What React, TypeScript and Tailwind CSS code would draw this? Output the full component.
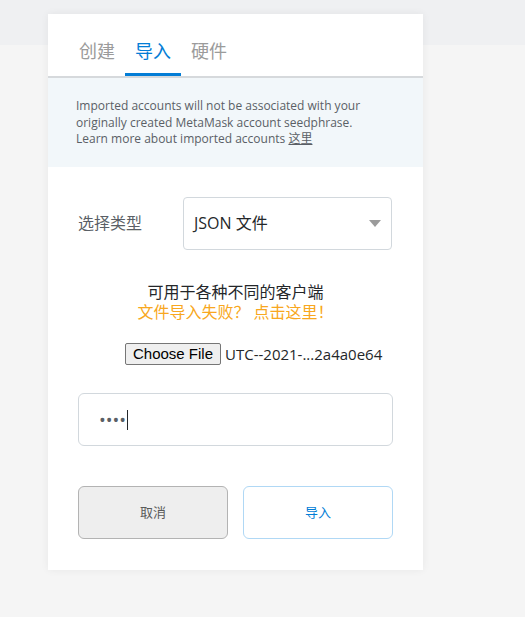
import React from 'react';

const tabs = ['创建', '导入', '硬件'];

const App = () => {
    const active = 1;

    return (
        <div className="min-h-screen bg-[linear-gradient(to_bottom,#eff0f2_45px,#f5f5f5_45px)] pt-[14px] pl-[48px] font-['Open_Sans','Noto_Sans_CJK_SC',sans-serif]">
            <div className="w-[375px] bg-white shadow-[0_0_8px_rgba(0,0,0,0.06)]">
                {/* tabs */}
                <div className="flex pl-[21px] h-[64px] border-b-2 border-[#d6d9dc]">
                    {tabs.map((t, i) => (
                        <div
                            key={t}
                            className={`w-[56px] flex flex-col justify-end items-center text-[18px] leading-none ${
                                i === active ? 'text-[#037dd6]' : 'text-[#9b9b9b]'
                            }`}
                        >
                            <span className="mb-[13px]">{t}</span>
                            <div className={`h-[3px] w-full ${i === active ? 'bg-[#037dd6]' : 'bg-transparent'}`} />
                        </div>
                    ))}
                </div>

                {/* notice */}
                <div className="bg-[#f2f7fa] pl-[28px] pr-[50px] pt-[20px] pb-[19px] text-[12px] leading-[16.5px] text-[#5a5f66]">
                    Imported accounts will not be associated with your originally created MetaMask account seedphrase.
                    Learn more about imported accounts <span className="underline">这里</span>
                </div>

                {/* type select */}
                <div className="flex items-center pl-[30px] pr-[31px] mt-[30px]">
                    <div className="w-[105px] text-[16px] text-[#5a5f66]">选择类型</div>
                    <div className="flex-1 h-[53px] border border-[#d2d8dd] rounded-[4px] flex items-center justify-between pl-[10px] pr-[10px]">
                        <span className="text-[16px] text-[#24272a]">JSON 文件</span>
                        <svg width="12" height="7" viewBox="0 0 12 7">
                            <path d="M0 0 L12 0 L6 7 Z" fill="#9b9b9b" />
                        </svg>
                    </div>
                </div>

                {/* hints */}
                <div className="mt-[32px] text-center text-[16px] leading-[20px]">
                    <div className="text-[#24272a]">可用于各种不同的客户端</div>
                    <div className="text-[#f8a720]">文件导入失败？ 点击这里！</div>
                </div>

                {/* file input */}
                <div className="flex items-center mt-[21px] pl-[77px]">
                    <button className="h-[22px] w-[96px] bg-[#efefef] border border-[#767676] rounded-[2px] text-[15px] font-['Liberation_Sans',sans-serif] text-black leading-none">
                        Choose File
                    </button>
                    <span className="ml-[4px] text-[15px] text-[#24272a]">UTC--2021-...2a4a0e64</span>
                </div>

                {/* password */}
                <div className="px-[30px] mt-[28px]">
                    <div className="h-[53px] border border-[#d2d8dd] rounded-[6px] flex items-center pl-[20px]">
                        <span className="text-[18px] leading-none text-[#5a5f66]">••••</span>
                        <span className="ml-[1px] w-px h-[20px] bg-[#24272a]" />
                    </div>
                </div>

                {/* actions */}
                <div className="flex gap-[15px] px-[30px] pt-[40px] pb-[31px]">
                    <button className="flex-1 h-[53px] bg-[#eeeeee] border border-[#b3b3b3] rounded-[6px] text-[13px] text-[#5a5a5a]">
                        取消
                    </button>
                    <button className="flex-1 h-[53px] bg-white border border-[#b0d8f5] rounded-[6px] text-[13px] text-[#037dd6]">
                        导入
                    </button>
                </div>
            </div>
        </div>
    );
};

export default App;
